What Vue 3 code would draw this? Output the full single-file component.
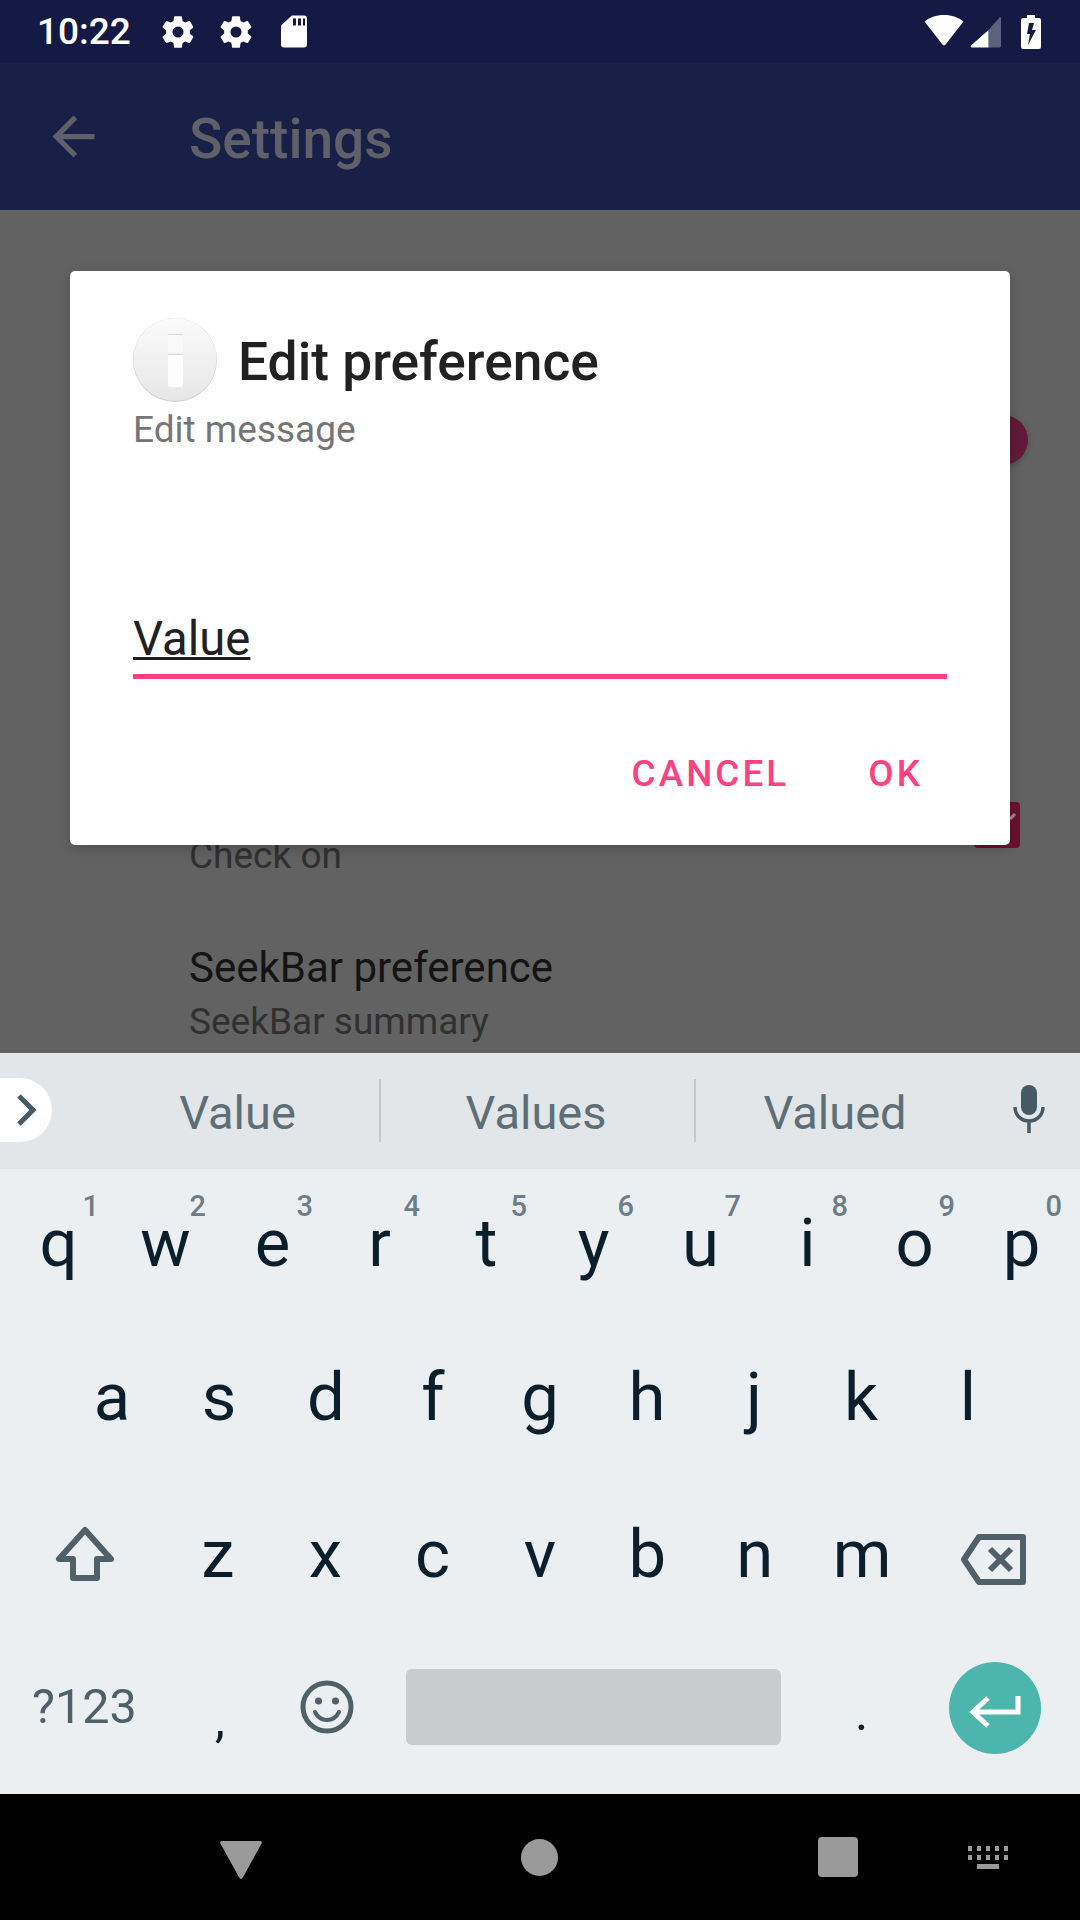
<script setup>
const rowOne = [
  { c: 'q', n: '1' }, { c: 'w', n: '2' }, { c: 'e', n: '3' }, { c: 'r', n: '4' }, { c: 't', n: '5' },
  { c: 'y', n: '6' }, { c: 'u', n: '7' }, { c: 'i', n: '8' }, { c: 'o', n: '9' }, { c: 'p', n: '0' }
]
const rowTwo = ['a', 's', 'd', 'f', 'g', 'h', 'j', 'k', 'l']
const rowThree = ['z', 'x', 'c', 'v', 'b', 'n', 'm']
const gear = 'M19.4 13c.04-.32.07-.65.07-1s-.03-.68-.07-1l2.1-1.65c.19-.15.24-.42.12-.64l-2-3.46c-.12-.22-.38-.3-.6-.22l-2.49 1c-.52-.4-1.08-.73-1.69-.98l-.38-2.65A.49.49 0 0 0 14 2h-4c-.25 0-.46.18-.49.42l-.38 2.65c-.61.25-1.17.59-1.69.98l-2.49-1c-.23-.09-.49 0-.6.22l-2 3.46c-.13.22-.07.49.12.64L4.57 11c-.04.32-.07.66-.07 1s.03.68.07 1l-2.11 1.65c-.19.15-.24.42-.12.64l2 3.46c.12.22.38.3.6.22l2.49-1c.52.4 1.08.73 1.69.98l.38 2.65c.03.24.24.42.49.42h4c.25 0 .46-.18.49-.42l.38-2.65c.61-.25 1.17-.59 1.69-.98l2.49 1c.23.09.49 0 .6-.22l2-3.46c.12-.22.07-.49-.12-.64L19.4 13zM12 15.5a3.5 3.5 0 1 1 0-7 3.5 3.5 0 0 1 0 7z'
</script>

<template>
  <div class="screen">
    <div class="status-bar">
      <span class="clock">10:22</span>
      <svg class="st-gear" viewBox="0 0 24 24"><path fill="#fff" :d="gear" /></svg>
      <svg class="st-gear" viewBox="0 0 24 24"><path fill="#fff" :d="gear" /></svg>
      <svg class="st-sd" viewBox="0 0 26 32">
        <path fill="#fff" fill-rule="evenodd" d="M11 0h12a3 3 0 0 1 3 3v26a3 3 0 0 1-3 3H3a3 3 0 0 1-3-3V10zM12 3v7h3V3zM17 3v7h3V3zM22 3v7h2V3z" />
      </svg>
      <span class="spacer"></span>
      <svg class="st-wifi" viewBox="0 0 40 32"><path fill="#fff" d="M20 1c8 0 14.500 2.500 19.500 6.500L21.500 30.500a2 2 0 0 1-3 0L.5 7.500C5.500 3.500 12 1 20 1z" /></svg>
      <svg class="st-signal" viewBox="0 0 32 32">
        <path fill="#5d6180" d="M18.500 14 30 1a1 1 0 0 1 1 1v28a1.500 1.500 0 0 1-1.500 1.500h-11z" />
        <path fill="#fff" d="M18.500 14v17.500H2a1.200 1.200 0 0 1-1-2z" />
      </svg>
      <svg class="st-batt" viewBox="0 0 20 34">
        <path fill="#fff" fill-rule="evenodd" d="M6 0h8v3h4a2 2 0 0 1 2 2v27a2 2 0 0 1-2 2H2a2 2 0 0 1-2-2V5a2 2 0 0 1 2-2h4zM7 30l8-15h-4l2-7H8l-2 11h3z" />
      </svg>
    </div>

    <div class="app-bar">
      <svg class="back" viewBox="0 0 24 24"><path fill="#5f6069" d="M20 11H7.830l5.590-5.590L12 4l-8 8 8 8 1.410-1.410L7.830 13H20z" /></svg>
      <span class="app-title">Settings</span>
    </div>

    <div class="content">
      <div class="pref-list">
        <div class="pref-check">
          <span class="pref-summary">Check on</span>
        </div>
        <div class="pref-seek">
          <span class="pref-title">SeekBar preference</span>
          <span class="pref-summary">SeekBar summary</span>
        </div>
      </div>
      <span class="switch-thumb"></span>
      <span class="check-box">
        <svg viewBox="0 0 46 46"><path fill="none" stroke="#a08a90" stroke-width="3" d="M36 17l5-5" /></svg>
      </span>

      <div class="dialog">
        <div class="dialog-head">
          <svg class="info-icon" viewBox="0 0 84 84">
            <defs>
              <linearGradient id="infoFill" x1="0" y1="0" x2="0" y2="1">
                <stop offset="0" stop-color="#fbfbfb" />
                <stop offset="1" stop-color="#e6e6e6" />
              </linearGradient>
            </defs>
            <circle cx="42" cy="42" r="42" fill="#d2d2d2" />
            <circle cx="42" cy="41.500" r="41.500" fill="url(#infoFill)" />
            <rect x="35" y="16" width="15" height="18" fill="#f9f9f9" />
            <rect x="35" y="16" width="15" height="1" fill="#d8d8d8" />
            <rect x="35" y="36" width="15" height="33" rx="2" fill="#fdfdfd" />
            <rect x="35" y="36" width="15" height="1" fill="#d8d8d8" />
          </svg>
          <span class="dialog-title">Edit preference</span>
        </div>
        <div class="dialog-message">Edit message</div>
        <div class="field">
          <span class="field-value">Value</span>
        </div>
        <div class="dialog-actions">
          <span class="action">CANCEL</span>
          <span class="action">OK</span>
        </div>
      </div>
    </div>

    <div class="suggest-bar">
      <div class="chevron-tab">
        <svg viewBox="0 0 22 34"><path fill="none" stroke="#455a64" stroke-width="5" d="M3 3l14 14L3 31" /></svg>
      </div>
      <span class="sug sug-first">Value</span>
      <i class="sug-sep"></i>
      <span class="sug sug-mid">Values</span>
      <i class="sug-sep"></i>
      <span class="sug sug-last">Valued</span>
      <svg class="mic" viewBox="0 0 34 48">
        <rect x="9" y="0" width="16" height="30" rx="8" fill="#455a64" />
        <path fill="none" stroke="#455a64" stroke-width="3.500" d="M3 22c0 8 6 14 14 14s14-6 14-14M17 36v12" />
      </svg>
    </div>

    <div class="keyboard">
      <div class="key-row row-one">
        <span v-for="k in rowOne" :key="k.c" class="key">
          {{ k.c }}<sup class="hint">{{ k.n }}</sup>
        </span>
      </div>
      <div class="key-row row-two">
        <span v-for="k in rowTwo" :key="k" class="key">{{ k }}</span>
      </div>
      <div class="key-row row-three">
        <span class="key-side side-shift">
          <svg class="shift" viewBox="0 0 60 56">
            <path fill="none" stroke="#4f6069" stroke-width="6" stroke-linejoin="round" d="M30 4 4 33h14v19h24V33h14z" />
          </svg>
        </span>
        <span v-for="k in rowThree" :key="k" class="key">{{ k }}</span>
        <span class="key-side side-back">
          <svg class="backspace" viewBox="0 0 66 53">
            <path fill="none" stroke="#4f6069" stroke-width="6" stroke-linejoin="round" d="M18 4h44v45H18L3 26.500z" />
            <path fill="none" stroke="#4f6069" stroke-width="6" d="M29 16l21 21M50 16 29 37" />
          </svg>
        </span>
      </div>
      <div class="key-row row-four">
        <span class="sym">?123</span>
        <span class="comma">,</span>
        <svg class="emoji" viewBox="0 0 54 54">
          <circle cx="27" cy="27" r="24" fill="none" stroke="#4f6069" stroke-width="5" />
          <circle cx="18.500" cy="21" r="3.500" fill="#4f6069" />
          <circle cx="35.500" cy="21" r="3.500" fill="#4f6069" />
          <path fill="none" stroke="#4f6069" stroke-width="4" stroke-linecap="round" d="M15 32c3 6 7 8 12 8s9-2 12-8" />
        </svg>
        <span class="space-bar"></span>
        <span class="period">.</span>
        <span class="enter">
          <svg viewBox="0 0 52 32"><path fill="none" stroke="#fff" stroke-width="5" d="M49 0v16H6M19 2 4 16l15 14" /></svg>
        </span>
      </div>
    </div>

    <div class="nav-bar">
      <svg class="nav-back" viewBox="0 0 44 40"><path fill="#9a9a9a" d="M2 0h40c1.500 0 2.300 1.300 1.600 2.600L23.800 38.800c-.8 1.500-2.800 1.500-3.600 0L.4 2.600C-.3 1.300.5 0 2 0z" /></svg>
      <span class="nav-home"></span>
      <span class="nav-recent"></span>
      <svg class="nav-kbd" viewBox="0 0 41 23">
        <g fill="#9a9a9a">
          <rect x="0" y="0" width="4" height="5" /><rect x="9" y="0" width="4" height="5" /><rect x="18" y="0" width="4" height="5" /><rect x="27" y="0" width="4" height="5" /><rect x="36" y="0" width="4" height="5" />
          <rect x="0" y="9" width="4" height="5" /><rect x="9" y="9" width="4" height="5" /><rect x="18" y="9" width="4" height="5" /><rect x="27" y="9" width="4" height="5" /><rect x="36" y="9" width="4" height="5" />
          <rect x="9" y="18" width="22" height="5" />
        </g>
      </svg>
    </div>
  </div>
</template>

<style scoped>
.screen {
  width: 1080px;
  height: 1920px;
  display: flex;
  flex-direction: column;
  overflow: hidden;
  font-family: Roboto, "Liberation Sans", sans-serif;
  background: #000;
}

.status-bar {
  height: 63px;
  flex: none;
  display: flex;
  align-items: center;
  background: #141a44;
  padding: 0 39px 0 37px;
}

.clock {
  color: #fff;
  font-size: 37px;
  font-weight: 500;
  margin-right: 28px;
}

.st-gear {
  width: 38px;
  height: 38px;
  margin-right: 20.500px;
}

.st-sd {
  width: 26px;
  height: 33px;
  margin-left: 5.500px;
}

.spacer {
  flex: 1;
}

.st-wifi {
  width: 40px;
  height: 32px;
  margin-right: 6px;
  margin-top: -3px;
}

.st-signal {
  width: 32px;
  height: 32px;
  margin-right: 19px;
}

.st-batt {
  width: 20px;
  height: 34px;
}

.app-bar {
  height: 147px;
  flex: none;
  display: flex;
  align-items: center;
  background: #182048;
  padding-left: 42px;
}

.back {
  width: 63px;
  height: 63px;
  margin-right: 84px;
}

.app-title {
  color: #5f6069;
  font-size: 55px;
  font-weight: 500;
  padding-top: 4px;
}

.content {
  position: relative;
  height: 843px;
  flex: none;
  background: #626262;
}

.pref-list {
  display: flex;
  flex-direction: column;
  padding: 619px 0 0 189px;
}

.pref-check {
  height: 112px;
}

.pref-seek {
  display: flex;
  flex-direction: column;
}

.pref-title {
  font-size: 42px;
  color: #141414;
  line-height: 54px;
}

.pref-summary {
  font-size: 37px;
  color: #303030;
  line-height: 54px;
}

.switch-thumb {
  position: absolute;
  left: 978px;
  top: 205px;
  width: 50px;
  height: 50px;
  border-radius: 50%;
  background: #621a38;
  box-shadow: 0 2px 6px rgba(0, 0, 0, 0.2);
}

.check-box {
  position: absolute;
  left: 974px;
  top: 592px;
  width: 46px;
  height: 46px;
  border-radius: 4px;
  background: #6b1030;
}

.check-box svg {
  display: block;
  width: 46px;
  height: 46px;
}

.dialog {
  position: absolute;
  left: 70px;
  top: 61px;
  width: 940px;
  height: 574px;
  box-sizing: border-box;
  padding: 47px 63px 0;
  background: #fff;
  border-radius: 5px;
  box-shadow: 0 4px 14px rgba(0, 0, 0, 0.2);
  display: flex;
  flex-direction: column;
}

.dialog-head {
  display: flex;
  align-items: center;
  height: 84px;
}

.info-icon {
  width: 84px;
  height: 84px;
  margin-right: 21px;
}

.dialog-title {
  font-size: 53.300px;
  font-weight: 500;
  color: #212121;
  padding-top: 4px;
}

.dialog-message {
  font-size: 37px;
  line-height: 48px;
  margin-top: 4px;
  color: #757575;
}

.field {
  margin-top: 149px;
  height: 71px;
  border-bottom: 5px solid #ff4081;
  display: flex;
  align-items: center;
}

.field-value {
  font-size: 47.250px;
  color: #212121;
  text-decoration: underline;
  text-decoration-thickness: 3px;
}

.dialog-actions {
  display: flex;
  justify-content: flex-end;
  gap: 79px;
  margin-top: 73px;
  padding-right: 24px;
}

.action {
  font-size: 36.750px;
  font-weight: 500;
  letter-spacing: 3.100px;
  color: #ff4081;
}

.suggest-bar {
  position: relative;
  height: 116px;
  flex: none;
  display: flex;
  align-items: center;
  background: #e3e6e9;
}

.chevron-tab {
  width: 52px;
  height: 64px;
  margin-top: -2px;
  border-radius: 0 32px 32px 0;
  background: #fff;
  display: flex;
  align-items: center;
  justify-content: flex-start;
  padding-left: 16px;
  box-sizing: border-box;
}

.chevron-tab svg {
  width: 22px;
  height: 34px;
}

.sug {
  font-size: 47px;
  color: #5d6e77;
  text-align: center;
  box-sizing: border-box;
  padding-top: 2px;
}

.sug-first {
  width: 327px;
  padding-left: 44px;
}

.sug-mid {
  width: 313px;
  padding-right: 3px;
}

.sug-last {
  width: 283px;
  padding-right: 5px;
}

.sug-sep {
  width: 2px;
  height: 63px;
  margin-top: -2px;
  background: #c5c9cc;
}

.mic {
  width: 34px;
  height: 48px;
  margin-left: 33px;
  margin-top: -4px;
}

.keyboard {
  height: 625px;
  flex: none;
  background: #ebeff2;
  display: flex;
  flex-direction: column;
}

.key-row {
  display: flex;
  justify-content: center;
  align-items: center;
  flex: none;
}

.row-one {
  height: 148px;
}

.row-two {
  height: 160px;
}

.row-three {
  height: 154px;
  justify-content: space-between;
}

.row-four {
  height: 151px;
  padding: 0 38px 0 32px;
  justify-content: flex-start;
}

.key {
  position: relative;
  width: 107px;
  text-align: center;
  font-size: 67px;
  color: #0a1f2b;
  line-height: 76px;
}

.hint {
  position: absolute;
  right: 13px;
  top: -14px;
  font-size: 29px;
  line-height: 30px;
  font-weight: 500;
  color: #6e7d85;
}

.key-side {
  width: 164px;
  display: flex;
  justify-content: center;
  box-sizing: border-box;
}

.side-shift {
  padding-left: 6px;
}

.side-back {
  padding-right: 8px;
  padding-top: 10px;
}

.shift {
  width: 60px;
  height: 56px;
}

.backspace {
  width: 66px;
  height: 53px;
}

.sym {
  font-size: 48.500px;
  color: #4f6069;
  width: 186px;
}

.comma,
.period {
  font-size: 50px;
  color: #0a1f2b;
}

.comma {
  width: 85px;
  margin-left: -3px;
  margin-top: 24px;
}

.emoji {
  width: 54px;
  height: 54px;
  margin-right: 52px;
}

.space-bar {
  width: 375px;
  height: 76px;
  border-radius: 6px;
  background: #c8cccf;
}

.period {
  margin-left: 74px;
  margin-right: 81px;
  margin-top: 13px;
}

.enter {
  width: 92px;
  height: 92px;
  margin-top: 3px;
  border-radius: 50%;
  background: #4db6ac;
  display: flex;
  align-items: center;
  justify-content: center;
}

.enter svg {
  width: 52px;
  height: 32px;
  margin-top: 8px;
}

.nav-bar {
  flex: 1;
  display: flex;
  align-items: center;
  background: #000;
  padding-left: 220px;
}

.nav-back {
  width: 42px;
  height: 38px;
  margin-right: 259px;
  margin-top: 5px;
}

.nav-home {
  width: 37px;
  height: 37px;
  border-radius: 50%;
  background: #9a9a9a;
  margin-right: 260px;
}

.nav-recent {
  width: 40px;
  height: 40px;
  border-radius: 4px;
  background: #9a9a9a;
  margin-right: 110px;
}

.nav-kbd {
  width: 41px;
  height: 23px;
}
</style>
